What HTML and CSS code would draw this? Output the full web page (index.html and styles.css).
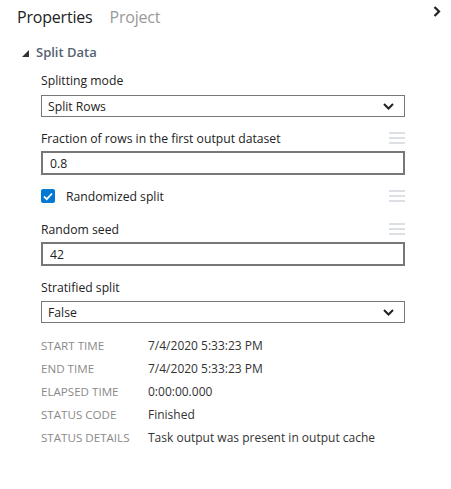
FILE: index.html
```html
<!DOCTYPE html>
<html>
<head>
<meta charset="utf-8">
<link rel="stylesheet" href="styles.css">
</head>
<body>
<div class="panel">
  <div class="tabs">
    <span class="tab active">Properties</span>
    <span class="tab">Project</span>
    <svg class="collapse" width="8" height="11" viewBox="0 0 8 11"><path d="M1.5 1 L6 5.5 L1.5 10" fill="none" stroke="#222" stroke-width="2.2"/></svg>
  </div>
  <div class="section-head">
    <svg class="tri" width="7" height="7" viewBox="0 0 7 7"><path d="M7 0 L7 7 L0 7 Z" fill="#333"/></svg>
    <span>Split Data</span>
  </div>
  <div class="fields">
    <div class="field">
      <div class="label-row sel"><span class="label">Splitting mode</span></div>
      <div class="select"><span>Split Rows</span><svg width="11" height="7" viewBox="0 0 11 7"><path d="M1 1 L5.5 5.5 L10 1" fill="none" stroke="#222" stroke-width="2"/></svg></div>
    </div>
    <div class="field">
      <div class="label-row"><span class="label">Fraction of rows in the first output dataset</span><span class="grip"><i></i><i></i><i></i></span></div>
      <div class="input">0.8</div>
    </div>
    <div class="field check-field">
      <div class="label-row"><span class="check"><svg width="10" height="9" viewBox="0 0 10 9"><path d="M1 4.5 L3.8 7.2 L9 1.5" fill="none" stroke="#fff" stroke-width="1.8"/></svg></span><span class="check-label">Randomized split</span><span class="grip"><i></i><i></i><i></i></span></div>
    </div>
    <div class="field">
      <div class="label-row"><span class="label">Random seed</span><span class="grip"><i></i><i></i><i></i></span></div>
      <div class="input">42</div>
    </div>
    <div class="field">
      <div class="label-row sel2"><span class="label">Stratified split</span></div>
      <div class="select"><span>False</span><svg width="11" height="7" viewBox="0 0 11 7"><path d="M1 1 L5.5 5.5 L10 1" fill="none" stroke="#222" stroke-width="2"/></svg></div>
    </div>
  </div>
  <div class="info">
    <div class="row"><span class="k">START TIME</span><span class="v">7/4/2020 5:33:23 PM</span></div>
    <div class="row"><span class="k">END TIME</span><span class="v">7/4/2020 5:33:23 PM</span></div>
    <div class="row"><span class="k">ELAPSED TIME</span><span class="v">0:00:00.000</span></div>
    <div class="row"><span class="k">STATUS CODE</span><span class="v">Finished</span></div>
    <div class="row"><span class="k">STATUS DETAILS</span><span class="v">Task output was present in output cache</span></div>
  </div>
</div>
</body>
</html>
```

FILE: styles.css
```css
* { box-sizing: border-box; }
html, body { margin: 0; padding: 0; background: #fff; }
body { font-family: "Open Sans", "Noto Sans", sans-serif; color: #222; width: 451px; height: 489px; overflow: hidden; }
.panel { padding: 6px 0 0 17px; }
.tabs { display: flex; align-items: baseline; gap: 17px; height: 26px; position: relative; padding-right: 10px; }
.tab { font-size: 16px; color: #999; letter-spacing: -0.2px; }
.tab.active { color: #222; }
.collapse { position: absolute; right: 10px; top: 0; }
.section-head { display: flex; align-items: center; gap: 7px; margin-top: 11px; padding-left: 5px; color: #556270; font-size: 13px; font-weight: 600; height: 18px; }
.tri { margin-top: 2px; }
.fields { padding-left: 24px; width: 388px; margin-top: 9px; }
.field { margin-bottom: 11px; }
.label-row { display: flex; align-items: center; height: 20px; margin-bottom: 3px; }
.label-row.sel { margin-bottom: 5px; }
.label-row.sel2 { margin-bottom: 4px; }
.label { font-size: 12.2px; color: #222; flex: 1; }
.grip { display: flex; flex-direction: column; gap: 3px; width: 16px; }
.grip i { display: block; height: 2px; background: #dcdfe3; }
.select { height: 22px; border: 1px solid #777; display: flex; align-items: center; justify-content: space-between; padding: 0 10px 0 6px; font-size: 12.2px; }
.input { height: 24px; border: 2px solid #777; display: flex; align-items: center; padding-left: 7px; font-size: 12.2px; }
.check-field { margin-top: 11px; margin-bottom: 13px; }
.check { width: 14px; height: 14px; background: #0078d4; border-radius: 2px; display: flex; align-items: center; justify-content: center; margin-right: 11px; }
.check-label { font-size: 12.2px; flex: 1; }
.info { padding-left: 24px; margin-top: 9px; }
.row { display: flex; height: 23px; align-items: center; font-size: 12px; }
.k { width: 107px; color: #8a8a8a; font-size: 11.6px; }
.v { color: #333; }
```
